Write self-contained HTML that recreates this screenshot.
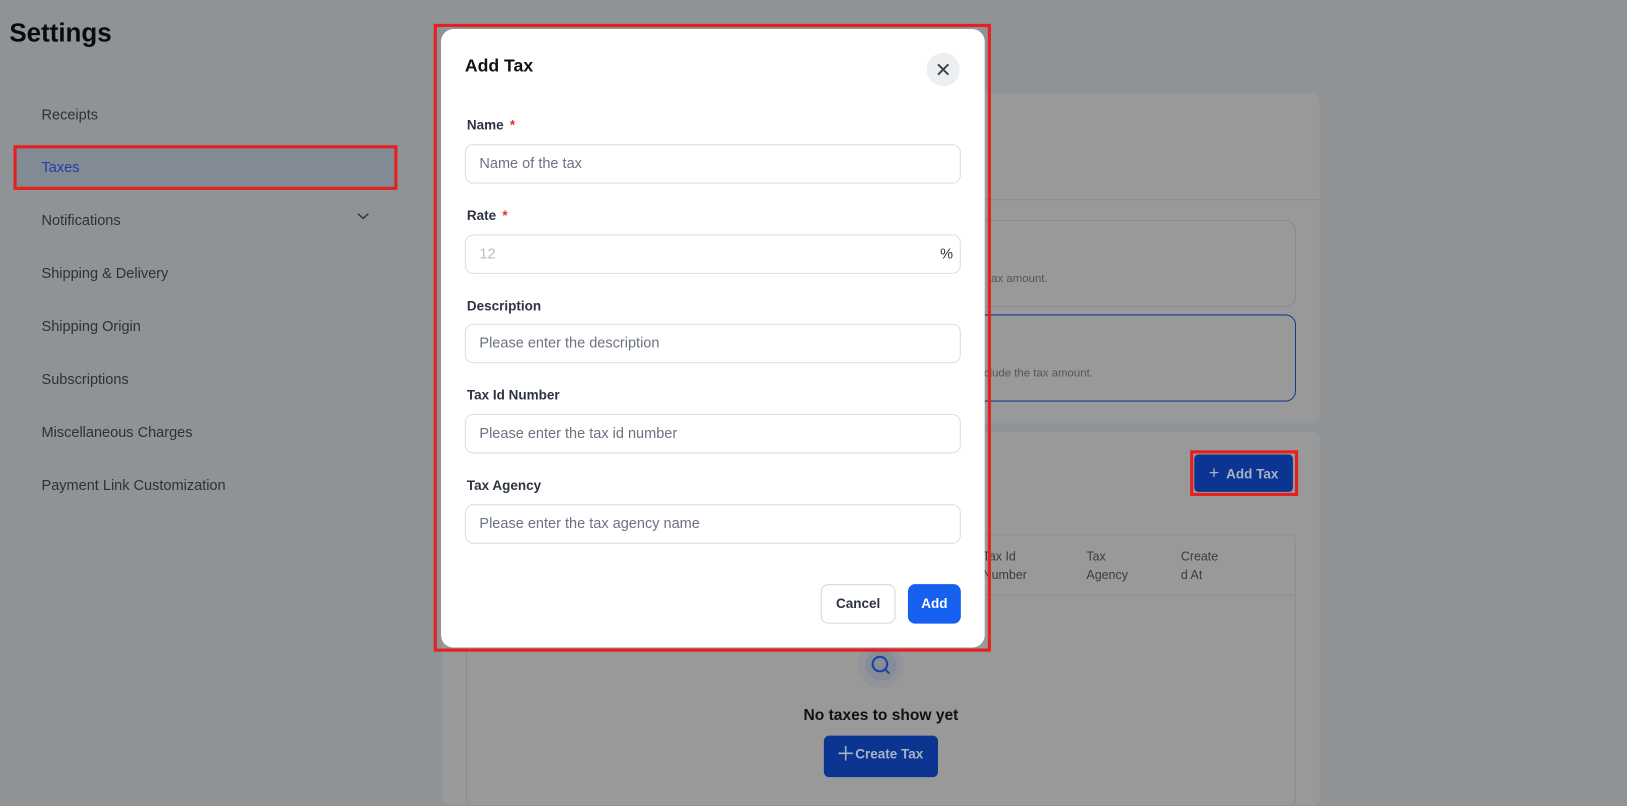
<!DOCTYPE html>
<html><head><meta charset="utf-8">
<style>
html,body{margin:0;padding:0;width:1627px;height:769px;overflow:hidden;background:#8f9396;font-family:"Liberation Sans",sans-serif;}
#s{position:absolute;left:0;top:0;width:1568px;height:741px;transform:scale(1.03763);transform-origin:0 0;background:#8f9396;}
.a{position:absolute;}
.nav{position:absolute;left:40px;font-size:14px;color:#2e3136;}
.lbl{position:absolute;left:450px;font-size:13px;font-weight:bold;color:#2d3440;}
.in{position:absolute;left:448px;width:476px;height:36px;border:1px solid #dcdee3;border-radius:8px;background:#fff;}
.in span{position:absolute;left:13px;top:9px;font-size:14px;color:#6b7280;}
.star{color:#e5312e;margin-left:6px;}
.th{position:absolute;top:527px;font-size:12px;color:#3a3d42;line-height:18px;}
</style></head><body><div id="s">
<div class="a" style="left:9px;top:18px;font-size:25px;font-weight:bold;color:#0a0a0a;">Settings</div>
<div class="nav" style="top:102px">Receipts</div>
<div class="a" style="left:13px;top:140px;width:364px;height:37px;border:3px solid #e5201f;background:#828a94;"></div>
<div class="nav" style="top:153px;color:#1c3fa8">Taxes</div>
<div class="nav" style="top:204px">Notifications</div>
<svg class="a" style="left:343px;top:203px" width="14" height="10"><path d="M2 3l5 4.5 5-4.5" fill="none" stroke="#2e3136" stroke-width="1.4"/></svg>
<div class="nav" style="top:255px">Shipping &amp; Delivery</div>
<div class="nav" style="top:306px">Shipping Origin</div>
<div class="nav" style="top:357px">Subscriptions</div>
<div class="nav" style="top:408px">Miscellaneous Charges</div>
<div class="nav" style="top:459px">Payment Link Customization</div>

<div class="a" style="left:426px;top:90px;width:846px;height:318px;background:#999;border-radius:8px;"></div>
<div class="a" style="left:426px;top:192px;width:846px;height:1px;background:#8c8c8c;"></div>
<div class="a" style="left:900px;top:212px;width:347px;height:82px;border:1px solid #8a8a8a;border-radius:10px;"></div>
<div class="a" style="left:943px;top:263px;font-size:11px;color:#555;">e tax amount.</div>
<div class="a" style="left:900px;top:303px;width:347px;height:82px;border:1px solid #1a3a8f;border-radius:10px;"></div>
<div class="a" style="left:942px;top:354px;font-size:11px;color:#555;">nclude the tax amount.</div>

<div class="a" style="left:426px;top:416px;width:846px;height:360px;background:#999;border-radius:8px;"></div>
<div class="a" style="left:1147px;top:434px;width:98px;height:38px;border:3px solid #e5201f;"></div>
<div class="a" style="left:1151px;top:438px;width:95px;height:36px;background:#0b3590;border-radius:4px;color:#a9b2c6;font-size:13px;font-weight:bold;line-height:36px;text-align:center;"><span style="font-weight:normal;font-size:17px">+</span>&nbsp; Add Tax</div>
<div class="a" style="left:449px;top:515px;width:798px;height:260px;border:1px solid #8e8e8e;border-radius:6px;"></div>
<div class="a" style="left:449px;top:573px;width:800px;height:1px;background:#8e8e8e;"></div>
<div class="th" style="left:947px">Tax Id<br>Number</div>
<div class="th" style="left:1047px">Tax<br>Agency</div>
<div class="th" style="left:1138px">Create<br>d At</div>
<div class="a" style="left:827px;top:619px;width:44px;height:44px;border-radius:50%;background:#919499;"></div>
<div class="a" style="left:834px;top:626px;width:30px;height:30px;border-radius:50%;background:#868c98;"></div>
<svg class="a" style="left:838px;top:630px" width="22" height="22"><circle cx="10" cy="10" r="7" fill="none" stroke="#1c3fa8" stroke-width="2"/><path d="M15 15l4 4" stroke="#1c3fa8" stroke-width="2"/></svg>
<div class="a" style="left:749px;top:681px;width:200px;text-align:center;font-size:15px;font-weight:bold;color:#111;">No taxes to show yet</div>
<div class="a" style="left:794px;top:709px;width:110px;height:40px;background:#0b3590;border-radius:5px;color:#a9b2c6;font-size:13px;font-weight:bold;line-height:36px;text-align:center;"><svg width="14" height="14" style="vertical-align:-2px;margin-right:2px"><path d="M7 0v14M0 7h14" stroke="#a9b2c6" stroke-width="1.5"/></svg>Create Tax</div>

<div class="a" style="left:418px;top:23px;width:531px;height:599px;border:3px solid #e5201f;"></div>
<div class="a" style="left:425px;top:28px;width:524px;height:596px;background:#fff;border-radius:12px;"></div>
<div class="a" style="left:448px;top:54px;font-size:17px;font-weight:bold;color:#111;">Add Tax</div>
<div class="a" style="left:893px;top:51px;width:32px;height:32px;border-radius:50%;background:#eceef0;"></div>
<svg class="a" style="left:902px;top:60px" width="14" height="14"><path d="M2 2l10 10M12 2L2 12" stroke="#3a3f47" stroke-width="1.8"/></svg>
<div class="lbl" style="top:113px">Name<span class="star">*</span></div>
<div class="in" style="top:139px"><span>Name of the tax</span></div>
<div class="lbl" style="top:200px">Rate<span class="star">*</span></div>
<div class="in" style="top:226px"><span style="color:#b9bcc2">12</span><span style="left:457px;color:#333">%</span></div>
<div class="lbl" style="top:287px">Description</div>
<div class="in" style="top:312px"><span>Please enter the description</span></div>
<div class="lbl" style="top:373px">Tax Id Number</div>
<div class="in" style="top:399px"><span>Please enter the tax id number</span></div>
<div class="lbl" style="top:460px">Tax Agency</div>
<div class="in" style="top:486px"><span>Please enter the tax agency name</span></div>
<div class="a" style="left:791px;top:563px;width:70px;height:36px;border:1px solid #d4d6db;border-radius:7px;font-size:13px;color:#2d3440;text-align:center;line-height:36px;font-weight:bold;">Cancel</div>
<div class="a" style="left:875px;top:563px;width:51px;height:38px;background:#1660f0;border-radius:7px;font-size:13px;color:#fff;text-align:center;line-height:38px;font-weight:bold;">Add</div>
</div></body></html>
